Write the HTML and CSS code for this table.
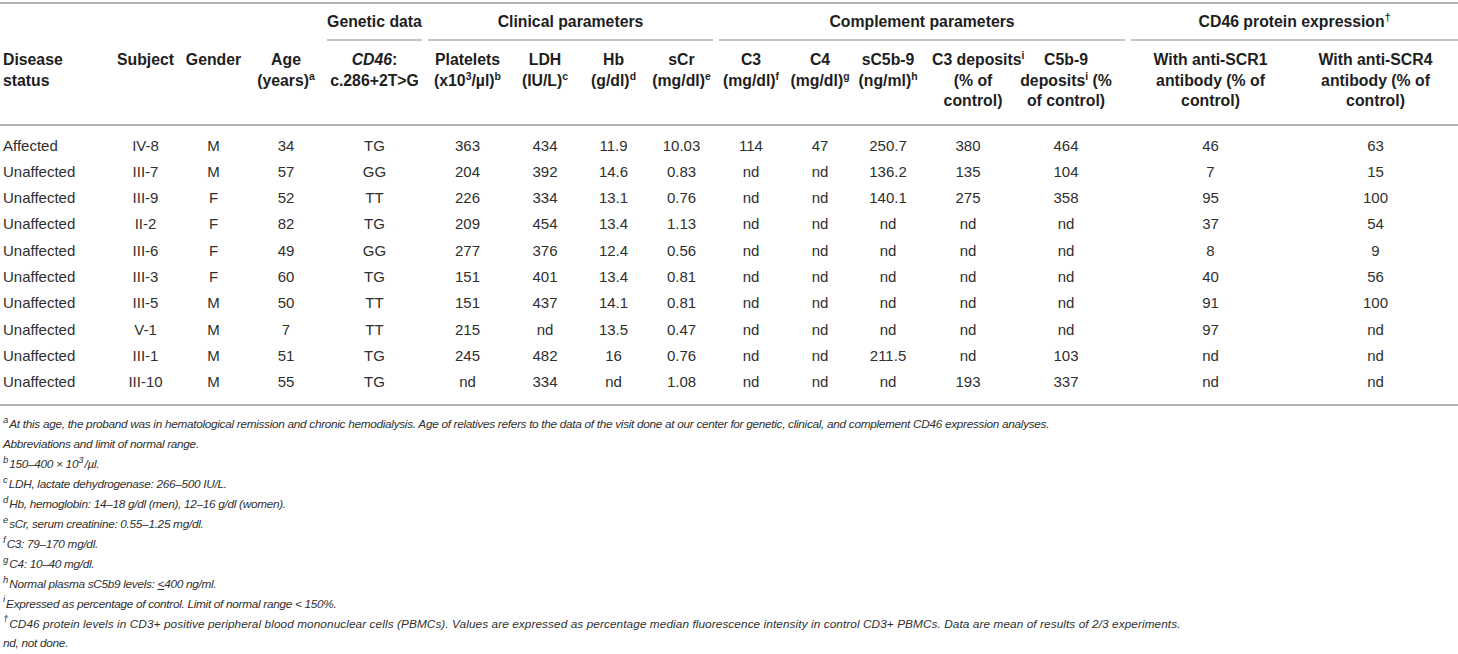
FILE: index.html
```html
<!DOCTYPE html>
<html lang="en">
<head>
<meta charset="utf-8">
<title>Table</title>
<link rel="stylesheet" href="styles.css">
</head>
<body>
<div class="page">
<table class="data">
  <colgroup>
    <col style="width:112px"><col style="width:67px"><col style="width:69px"><col style="width:76px">
    <col style="width:101px"><col style="width:85px"><col style="width:70px"><col style="width:67px">
    <col style="width:69px"><col style="width:70px"><col style="width:68px"><col style="width:68px">
    <col style="width:92px"><col style="width:114px"><col style="width:165px"><col style="width:165px">
  </colgroup>
  <thead>
    <tr class="groups">
      <th></th><th></th><th></th><th></th>
      <th><div class="grp">Genetic data</div></th>
      <th colspan="4"><div class="grp">Clinical parameters</div></th>
      <th colspan="5"><div class="grp">Complement parameters</div></th>
      <th colspan="2"><div class="grp last">CD46 protein expression<sup>†</sup></div></th>
    </tr>
    <tr class="cols">
      <th class="left">Disease<br>status</th>
      <th>Subject</th>
      <th>Gender</th>
      <th>Age<br>(years)<sup>a</sup></th>
      <th><i>CD46</i>:<br>c.286+2T&gt;G</th>
      <th>Platelets<br>(x10<sup>3</sup>/µl)<sup>b</sup></th>
      <th>LDH<br>(IU/L)<sup>c</sup></th>
      <th>Hb<br>(g/dl)<sup>d</sup></th>
      <th>sCr<br>(mg/dl)<sup>e</sup></th>
      <th>C3<br>(mg/dl)<sup>f</sup></th>
      <th>C4<br>(mg/dl)<sup>g</sup></th>
      <th>sC5b-9<br>(ng/ml)<sup>h</sup></th>
      <th class="nudge">C3 deposits<sup>i</sup><br>(% of<br>control)</th>
      <th class="shift">C5b-9<br>deposits<sup>i</sup> (%<br>of control)</th>
      <th>With anti-SCR1<br>antibody (% of<br>control)</th>
      <th>With anti-SCR4<br>antibody (% of<br>control)</th>
    </tr>
  </thead>
  <tbody>
    <tr><td class="left">Affected</td><td>IV-8</td><td>M</td><td>34</td><td>TG</td><td>363</td><td>434</td><td>11.9</td><td>10.03</td><td>114</td><td>47</td><td>250.7</td><td>380</td><td class="shift">464</td><td>46</td><td>63</td></tr>
    <tr><td class="left">Unaffected</td><td>III-7</td><td>M</td><td>57</td><td>GG</td><td>204</td><td>392</td><td>14.6</td><td>0.83</td><td>nd</td><td>nd</td><td>136.2</td><td>135</td><td class="shift">104</td><td>7</td><td>15</td></tr>
    <tr><td class="left">Unaffected</td><td>III-9</td><td>F</td><td>52</td><td>TT</td><td>226</td><td>334</td><td>13.1</td><td>0.76</td><td>nd</td><td>nd</td><td>140.1</td><td>275</td><td class="shift">358</td><td>95</td><td>100</td></tr>
    <tr><td class="left">Unaffected</td><td>II-2</td><td>F</td><td>82</td><td>TG</td><td>209</td><td>454</td><td>13.4</td><td>1.13</td><td>nd</td><td>nd</td><td>nd</td><td>nd</td><td class="shift">nd</td><td>37</td><td>54</td></tr>
    <tr><td class="left">Unaffected</td><td>III-6</td><td>F</td><td>49</td><td>GG</td><td>277</td><td>376</td><td>12.4</td><td>0.56</td><td>nd</td><td>nd</td><td>nd</td><td>nd</td><td class="shift">nd</td><td>8</td><td>9</td></tr>
    <tr><td class="left">Unaffected</td><td>III-3</td><td>F</td><td>60</td><td>TG</td><td>151</td><td>401</td><td>13.4</td><td>0.81</td><td>nd</td><td>nd</td><td>nd</td><td>nd</td><td class="shift">nd</td><td>40</td><td>56</td></tr>
    <tr><td class="left">Unaffected</td><td>III-5</td><td>M</td><td>50</td><td>TT</td><td>151</td><td>437</td><td>14.1</td><td>0.81</td><td>nd</td><td>nd</td><td>nd</td><td>nd</td><td class="shift">nd</td><td>91</td><td>100</td></tr>
    <tr><td class="left">Unaffected</td><td>V-1</td><td>M</td><td>7</td><td>TT</td><td>215</td><td>nd</td><td>13.5</td><td>0.47</td><td>nd</td><td>nd</td><td>nd</td><td>nd</td><td class="shift">nd</td><td>97</td><td>nd</td></tr>
    <tr><td class="left">Unaffected</td><td>III-1</td><td>M</td><td>51</td><td>TG</td><td>245</td><td>482</td><td>16</td><td>0.76</td><td>nd</td><td>nd</td><td>211.5</td><td>nd</td><td class="shift">103</td><td>nd</td><td>nd</td></tr>
    <tr><td class="left">Unaffected</td><td>III-10</td><td>M</td><td>55</td><td>TG</td><td>nd</td><td>334</td><td>nd</td><td>1.08</td><td>nd</td><td>nd</td><td>nd</td><td>193</td><td class="shift">337</td><td>nd</td><td>nd</td></tr>
  </tbody>
</table>
<div class="notes">
  <p><sup>a</sup>At this age, the proband was in hematological remission and chronic hemodialysis. Age of relatives refers to the data of the visit done at our center for genetic, clinical, and complement CD46 expression analyses.</p>
  <p>Abbreviations and limit of normal range.</p>
  <p><sup>b</sup>150–400 × 10<sup>3</sup>/µl.</p>
  <p><sup>c</sup>LDH, lactate dehydrogenase: 266–500 IU/L.</p>
  <p><sup>d</sup>Hb, hemoglobin: 14–18 g/dl (men), 12–16 g/dl (women).</p>
  <p><sup>e</sup>sCr, serum creatinine: 0.55–1.25 mg/dl.</p>
  <p><sup>f</sup>C3: 79–170 mg/dl.</p>
  <p><sup>g</sup>C4: 10–40 mg/dl.</p>
  <p><sup>h</sup>Normal plasma sC5b9 levels: <u>&lt;</u>400 ng/ml.</p>
  <p><sup>i</sup>Expressed as percentage of control. Limit of normal range &lt; 150%.</p>
  <p class="wide"><sup>†</sup>CD46 protein levels in CD3+ positive peripheral blood mononuclear cells (PBMCs). Values are expressed as percentage median fluorescence intensity in control CD3+ PBMCs. Data are mean of results of 2/3 experiments.</p>
  <p>nd, not done.</p>
</div>
</div>
</body>
</html>
```

FILE: styles.css
```css
html, body {
  margin: 0;
  padding: 0;
  background: #ffffff;
}
body {
  font-family: "Liberation Sans", Arial, Helvetica, sans-serif;
  color: #2a2a2a;
  font-size: 15px;
}
.page {
  width: 1458px;
  padding-top: 2px;
}
.data {
  width: 1458px;
  border-collapse: collapse;
  table-layout: fixed;
  border-top: 2px solid #b4b4b4;
  border-bottom: 2px solid #b4b4b4;
}
.data th {
  font-weight: bold;
  font-size: 15.8px;
  color: #1e1e1e;
  text-align: center;
  line-height: 20.5px;
  padding: 0;
  white-space: nowrap;
}
.data .left {
  text-align: left;
  padding-left: 3px;
}
.groups th {
  height: 37px;
  vertical-align: bottom;
  padding: 0;
}
.grp {
  margin: 0 3px;
  padding: 0 0 7px;
  border-bottom: 2px solid #c4c4c4;
}
.grp.last {
  margin-right: 0;
}
.cols th {
  vertical-align: top;
  padding-top: 9px;
  padding-bottom: 12px;
  border-bottom: 2px solid #b4b4b4;
}
.cols th.left {
  padding-left: 3px;
}
.cols th.shift {
  padding-right: 10px;
}
.cols th.nudge {
  padding-left: 10px;
}
sup {
  font-size: 0.66em;
  line-height: 0;
  vertical-align: 0.55em;
}
.data td {
  text-align: center;
  line-height: 20.3px;
  padding: 3px 0;
  white-space: nowrap;
  color: #2f2f2f;
}
.data td.shift {
  padding-right: 10px;
}
.data tbody tr:first-child td {
  padding-top: 10px;
}
.data tbody tr:last-child td {
  padding-bottom: 12px;
}
.notes {
  padding-top: 9px;
  padding-left: 3px;
  font-style: italic;
  font-size: 11.8px;
  letter-spacing: -0.3px;
  color: #2f2f2f;
}
.notes p {
  margin: 0;
  line-height: 19.9px;
}
.notes p.wide {
  letter-spacing: 0.08px;
}
.notes sup {
  font-size: 0.8em;
  letter-spacing: 0;
  margin-right: 1px;
}
```
